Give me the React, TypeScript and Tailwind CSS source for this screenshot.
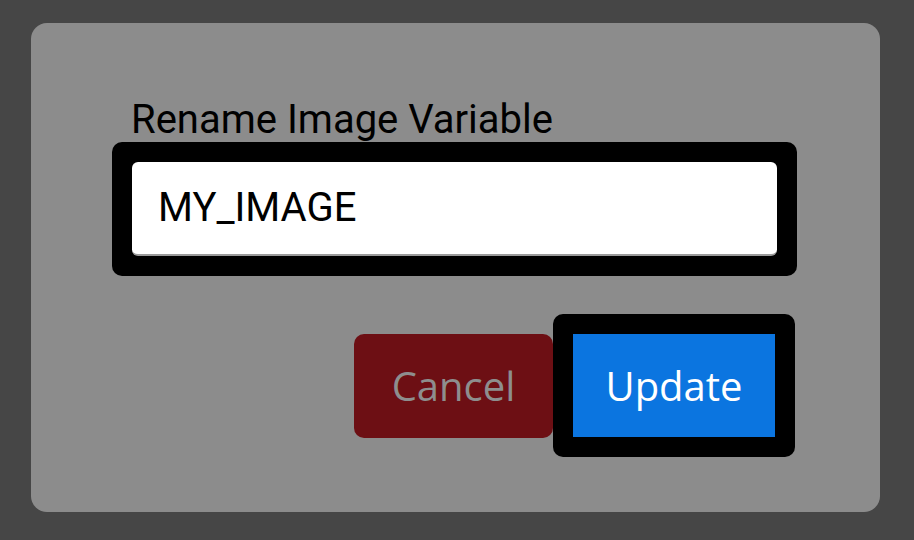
const App = () => {
    return (
        <div className="w-full h-[540px] bg-[#464646] pt-[23px] pl-[31px]">
            <div className="w-[849px] h-[489px] bg-[#8c8c8c] rounded-[16px] pt-[75px] px-[81px]">
                <label className="block pl-[19px] text-[40px] leading-[44px] text-black" style={{ fontFamily: 'Roboto, sans-serif' }}>
                    Rename Image Variable
                </label>
                <div className="w-[685px] bg-black rounded-[10px] p-[20px]">
                    <input
                        type="text"
                        defaultValue="MY_IMAGE"
                        className="w-full h-[94px] bg-white rounded-[6px] border-b-2 border-[#9a9a9a] pl-[26px] pb-[2px] text-[40px] text-black outline-none"
                        style={{ fontFamily: 'Roboto, sans-serif' }}
                    />
                </div>
                <div className="flex justify-end items-center mt-[38px] pr-[4px]">
                    <button className="w-[199px] h-[104px] bg-[#6d0f14] rounded-[10px] text-[40px] text-[#8e8e8e]" style={{ fontFamily: '"Open Sans", sans-serif' }}>
                        Cancel
                    </button>
                    <div className="bg-black rounded-[10px] p-[20px]">
                        <button className="w-[202px] h-[103px] bg-[#0b75e0] text-[40px] text-white" style={{ fontFamily: '"Open Sans", sans-serif' }}>
                            Update
                        </button>
                    </div>
                </div>
            </div>
        </div>
    )
}

export default App;
